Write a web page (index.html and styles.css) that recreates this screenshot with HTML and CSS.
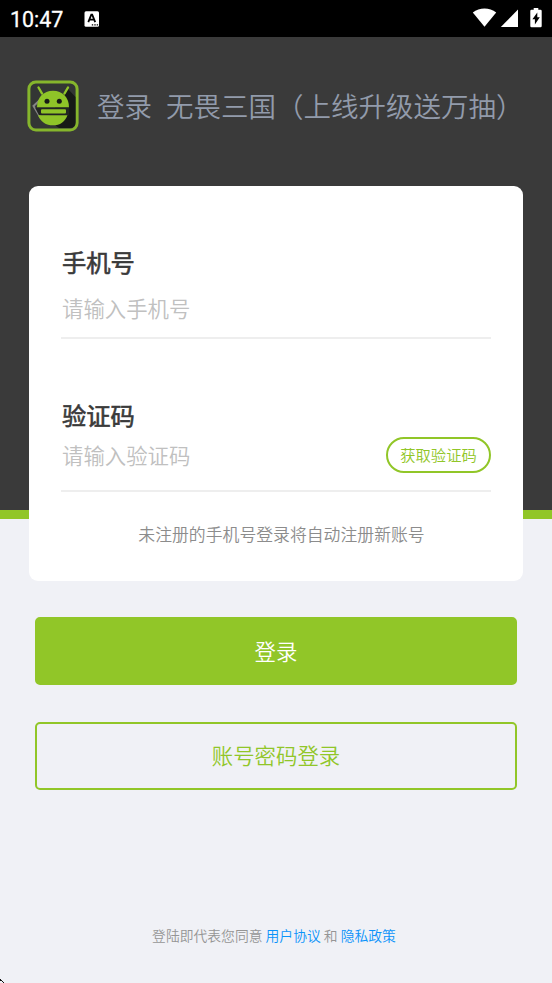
FILE: index.html
```
<!DOCTYPE html>
<html lang="zh-CN">
<head>
<meta charset="utf-8">
<title>登录</title>
<link rel="stylesheet" href="styles.css">
</head>
<body>
<div class="statusbar">
  <span class="clock">10:47</span>
  <svg class="ime" width="16" height="16" viewBox="0 0 16 16"><rect x=".5" y=".3" width="14.5" height="15.4" rx="1.5" fill="#fff"/><path d="M4.3 11.2L7.3 3.6h.9l3 7.6M5.4 8.7h4.7" fill="none" stroke="#000" stroke-width="1.8"/><path d="M7.8 13.2h1.400v1.400H7.800zM10.300 13.200h1.400v1.400h-1.400zM12.700 13.200h1.400v1.400h-1.400z" fill="#000"/></svg>
  <svg class="signals" width="72" height="20" viewBox="0 0 72 20"><path d="M.8 4.500C7.500-.8 17.500-.8 24.200 4.500L12.500 18.800z" fill="#fff"/><path d="M46 1.600V19H28.800z" fill="#fff"/><path d="M61.700 0h4.600v1.800h2.200q1.200 0 1.200 1.200v15q0 1.200-1.200 1.200h-9q-1.200 0-1.200-1.200V3q0-1.200 1.200-1.200h2.200z" fill="#fff"/><path d="M65.300 4.500v4.800h2.500l-4.900 7.300v-5.300h-2.500z" fill="#000"/></svg>
</div>
<main class="page">
  <header class="title">
    <svg class="logo" width="52" height="52" viewBox="0 0 52 52">
      <rect x="1.900" y="1.900" width="48.200" height="48.200" rx="7" fill="#333634" stroke="#86b62c" stroke-width="3"/>
      <path d="M41 9l7.500 8v25q0 6-6 6H32L20 39z" fill="#171a17"/>
      <path d="M13 20L6.500 26L14 38.500" fill="none" stroke="#858585" stroke-width="2"/>
      <path d="M11.500 7.500L15 13.500M41 7.500L37.500 13.500" stroke="#8fc428" stroke-width="2.400" stroke-linecap="round"/>
      <path d="M10 27.500C10 17.500 16.500 10.800 26 10.800S42 17.500 42 27.500z" fill="#8fc428"/>
      <circle cx="20" cy="21.300" r="2.500" fill="#171a17"/><circle cx="32.300" cy="21.300" r="2.500" fill="#171a17"/>
      <path d="M8 27.500h34v7.700H12z" fill="#222522"/>
      <rect x="14" y="29.300" width="25" height="4.200" rx="1" fill="#8fc428"/>
      <path d="M11 35.200h29.500C38 41.800 33 45.300 26 45.300S13.500 41.800 11 35.200z" fill="#8fc428"/>
    </svg>
    <span class="action">登录</span><span class="game">无畏三国（上线升级送万抽）</span>
  </header>
  <section class="card">
    <div class="field">
      <div class="label">手机号</div>
      <div class="row phone"><span class="hint">请输入手机号</span></div>
    </div>
    <div class="field code-field">
      <div class="label">验证码</div>
      <div class="row code"><span class="hint">请输入验证码</span><span class="get-code">获取验证码</span></div>
    </div>
    <p class="note">未注册的手机号登录将自动注册新账号</p>
  </section>
  <div class="actions">
    <div class="btn primary">登录</div>
    <div class="btn outline">账号密码登录</div>
  </div>
  <footer class="terms">登陆即代表您同意 <a>用户协议</a> 和 <a>隐私政策</a></footer>
</main>
<svg class="cursor" width="4" height="4" viewBox="0 0 4 4"><path d="M0 0h1v1H0zM1 1h1v1H1zM2 2h1v1H2zM3 3h1v1H3zM0 1h1v1H0z" fill="#111"/></svg>
</body>
</html>
```
FILE: styles.css
```
* { box-sizing: border-box; }
body {
  margin: 0;
  height: 983px;
  overflow: hidden;
  display: flex;
  flex-direction: column;
  font-family: "Noto Sans CJK SC", sans-serif;
  font-weight: 350;
  background: #f0f1f6;
}
.statusbar {
  height: 37px;
  flex: none;
  display: flex;
  align-items: center;
  padding: 0 8px 0 10px;
  background: #000;
  color: #fff;
}
.clock {
  width: 74px;
  font: 400 21.400px/37px Roboto, sans-serif;
  padding-top: 1px;
  -webkit-text-stroke: .3px #fff;
}
.signals { margin-left: auto; margin-top: -1px; }
.page {
  flex: 1;
  display: flex;
  flex-direction: column;
  background: linear-gradient(#3a3a3a 473px, #91c628 473px, #91c628 482px, #f0f1f6 482px);
}
.title {
  height: 149px;
  display: flex;
  align-items: center;
  padding: 0 0 11px 27px;
  font-size: 27.500px;
  line-height: 40px;
  color: #929bab;
  white-space: nowrap;
}
.action, .game { padding-bottom: 2px; }
.action { margin-left: 18px; }
.game { margin-left: 14px; }
.card {
  height: 395px;
  margin: 0 29px;
  padding: 58px 32px 0;
  background: #fff;
  border-radius: 9px;
}
.label {
  font-size: 24.300px;
  font-weight: 400;
  line-height: 36px;
  color: #3a3a3a;
  -webkit-text-stroke: .6px #3a3a3a;
  padding-left: 1px;
}
.row {
  display: flex;
  align-items: center;
  justify-content: space-between;
  border-bottom: 2px solid #eee;
}
.phone { height: 59px; padding-bottom: 2px; }
.code { height: 59px; padding-bottom: 13px; }
.code-field { padding-top: 58px; }
.hint {
  padding-left: 1px;
  font-size: 21.400px;
  line-height: 32px;
  color: #c0c0c0;
}
.get-code {
  width: 105px;
  height: 36px;
  border: 2px solid #91c628;
  border-radius: 18px;
  font-size: 15.300px;
  line-height: 31px;
  text-align: center;
  color: #91c628;
}
.note {
  margin: 29px 0 0 11px;
  font-size: 16.850px;
  line-height: 26px;
  text-align: center;
  color: #8c8c8c;
  white-space: nowrap;
}
.actions {
  display: flex;
  flex-direction: column;
  gap: 37px;
  padding: 36px 35px 0;
}
.btn {
  height: 68px;
  border: 2px solid #91c628;
  border-radius: 5px;
  font-size: 21.400px;
  line-height: 64px;
  text-align: center;
  color: #91c628;
}
.outline { line-height: 62px; }
.primary { background: #91c628; color: #fff; }
.terms {
  margin-top: 134px;
  padding-right: 4px;
  font-size: 13.800px;
  line-height: 22px;
  text-align: center;
  color: #959595;
}
.terms a { color: #0b93fa; }
.cursor { position: absolute; left: 0; bottom: 0; }
```
